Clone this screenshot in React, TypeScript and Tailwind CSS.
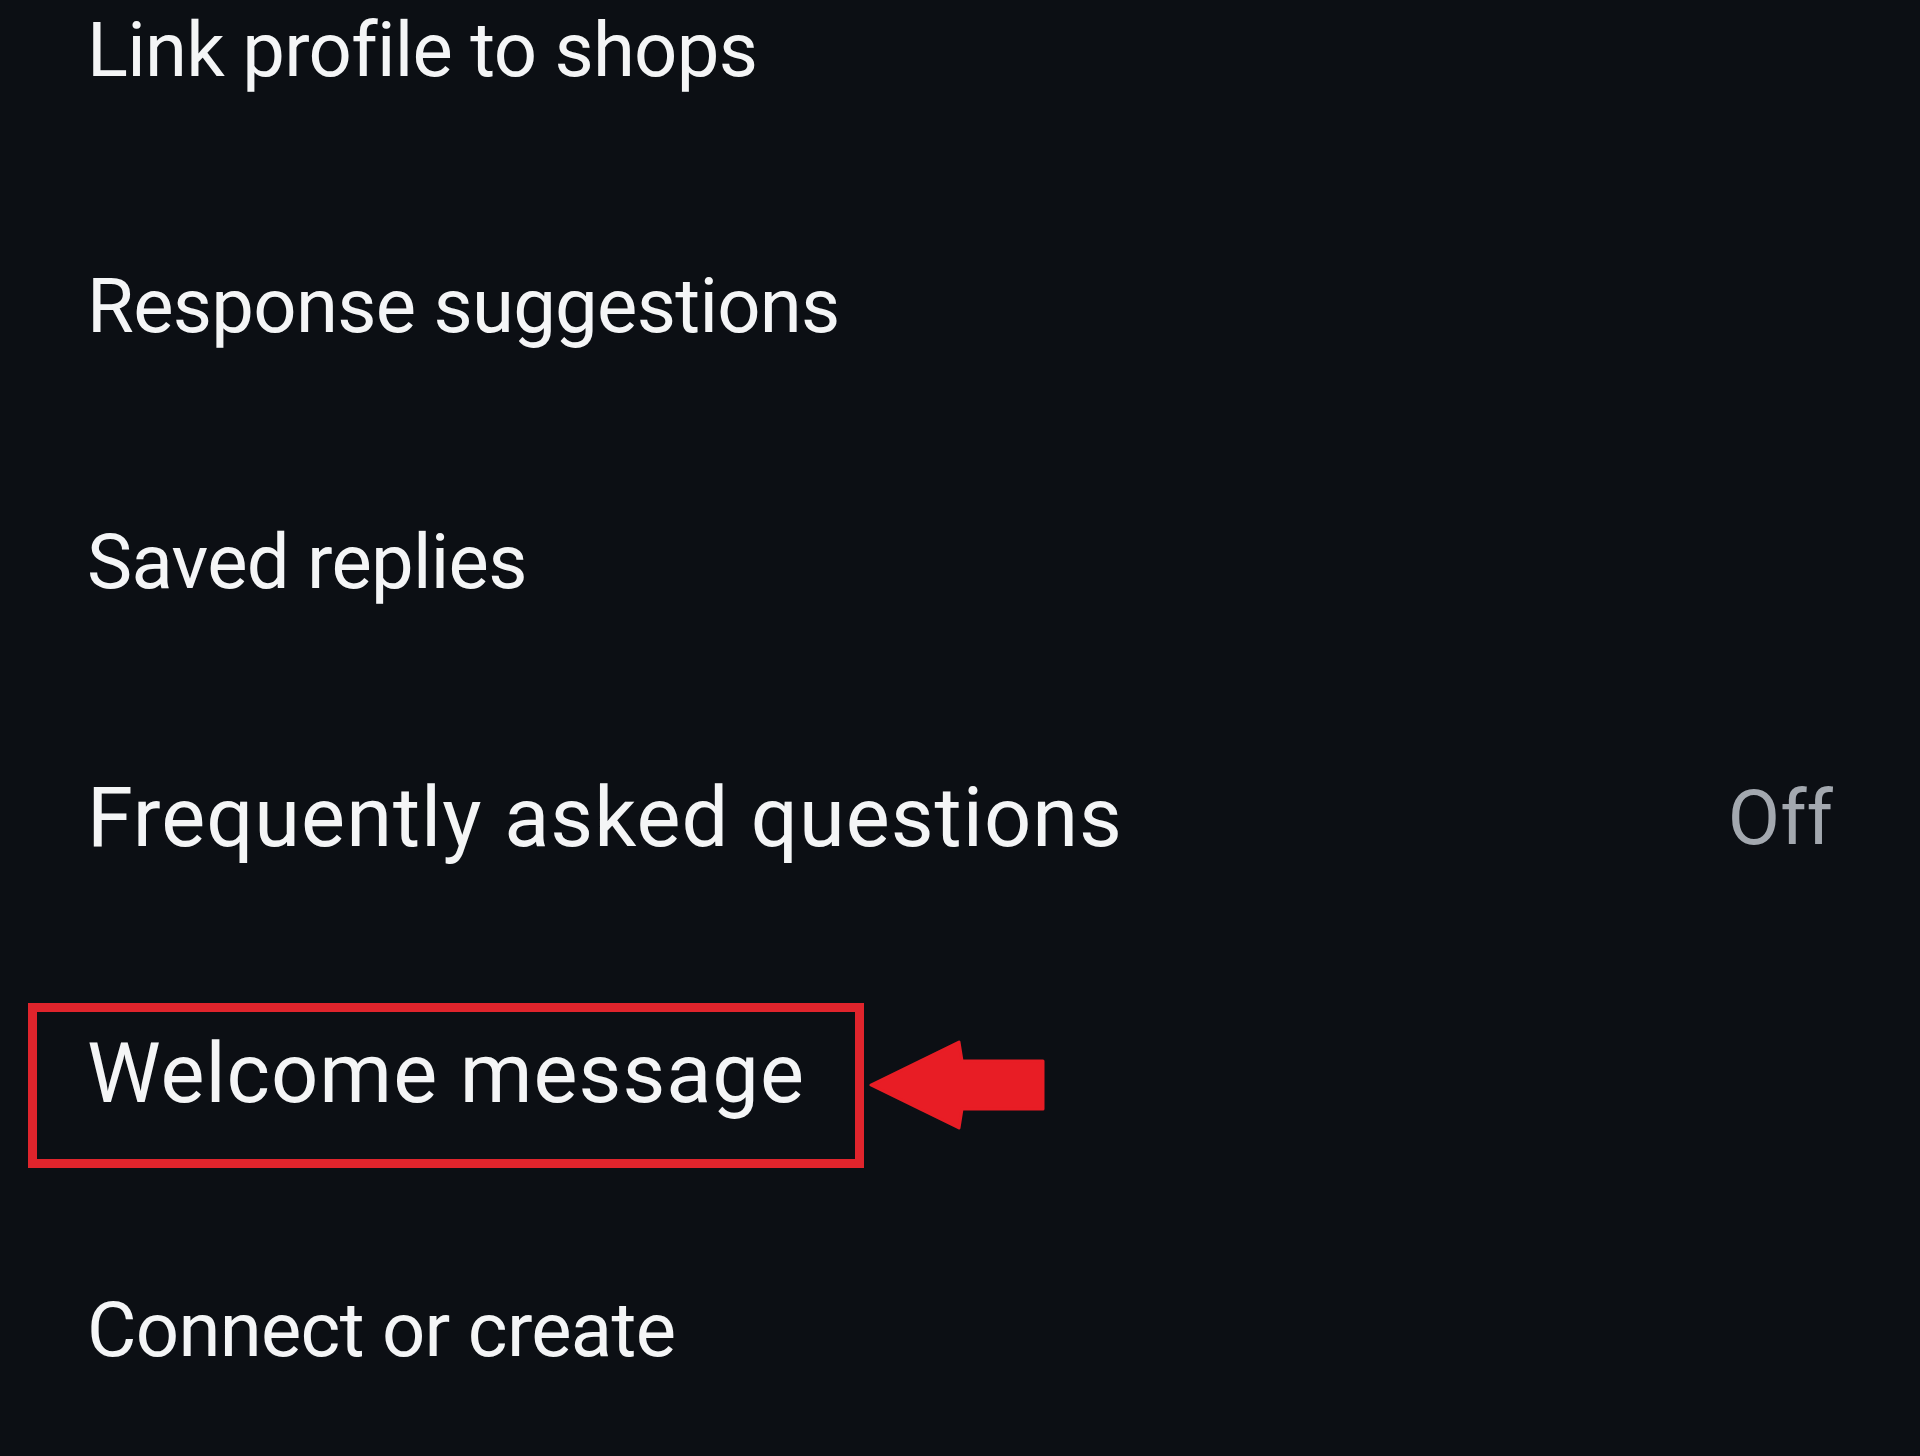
const rows = [
  { label: "Link profile to shops" },
  { label: "Response suggestions" },
  { label: "Saved replies" },
  { label: "Frequently asked questions", value: "Off", large: true },
  { label: "Welcome message", highlight: true, large: true },
  { label: "Connect or create" },
];

const App = () => {
  return (
    <div className="relative h-[1456px] w-[1920px] overflow-hidden bg-[#0c0f14] font-['Roboto',sans-serif]">
      <div className="-mt-[78px] flex flex-col">
        {rows.map((row) => (
          <div key={row.label} className="relative flex h-[256px] items-center justify-between pl-[87px] pr-[87px]">
            <span
              className={
                row.large
                  ? "text-[83px] tracking-[1px] text-[#f4f5f6]"
                  : "text-[76px] tracking-[-0.7px] text-[#f4f5f6]"
              }
            >
              {row.label}
            </span>
            {row.value && <span className="text-[76px] text-[#a3a8af]">{row.value}</span>}
            {row.highlight && (
              <>
                <div className="absolute left-[28px] top-[57px] h-[165px] w-[836px] border-[9px] border-[#e0242c]" />
                <svg
                  className="absolute left-[869px] top-[94px]"
                  width="178"
                  height="92"
                  viewBox="0 0 178 92"
                >
                  <polygon
                    points="2,45 90,2 93,21 174,21 174,69 93,69 90,88"
                    fill="#e81d25"
                    stroke="#e81d25"
                    strokeWidth="3"
                    strokeLinejoin="round"
                  />
                </svg>
              </>
            )}
          </div>
        ))}
      </div>
    </div>
  );
};

export default App;
